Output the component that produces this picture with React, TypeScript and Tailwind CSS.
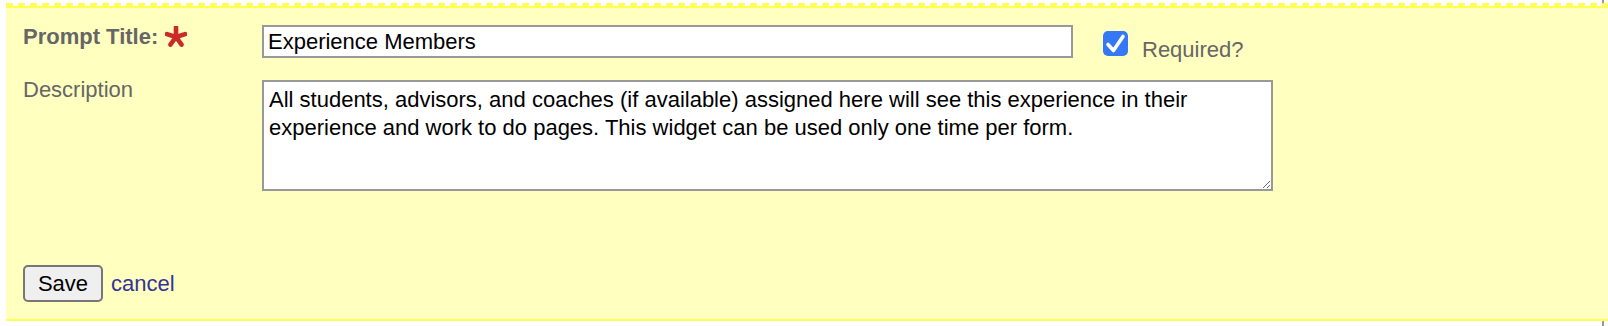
import React from 'react';

const RequiredStar = () => (
  <svg width="22" height="22" viewBox="-11 -11 22 22" className="ml-[7px] mt-[1px]">
    {[-90, -18, 54, 126, 198].map((a) => (
      <line
        key={a}
        x1="0"
        y1="0"
        x2={9.5 * Math.cos((a * Math.PI) / 180)}
        y2={9.5 * Math.sin((a * Math.PI) / 180)}
        stroke="#cc2929"
        strokeWidth="4.6"
        strokeLinecap="round"
      />
    ))}
  </svg>
);

const CheckedBox = () => (
  <span className="mt-[6px] ml-[30px] flex h-[25px] w-[25px] shrink-0 items-center justify-center rounded-[5px] bg-[#3478f6]">
    <svg width="25" height="25" viewBox="0 0 25 25">
      <path d="M5 13.5 L10.5 19.5 L20 5.5" fill="none" stroke="#fff" strokeWidth="3.6" strokeLinecap="round" strokeLinejoin="round" />
    </svg>
  </span>
);

export default function App() {
  return (
    <div className="h-[326px] w-[1604px] border-r-2 border-[#999] bg-white pt-[3px] font-['Liberation_Sans',Arial,sans-serif]">
      <div className="ml-[6px] w-[1602px] border-b-2 border-[#ffff55] bg-[#ffffc0]">
        <div className="h-[3px] bg-[repeating-linear-gradient(90deg,#ffff55_0_7px,#ffffff_7px_12px)]" />
        <div className="h-[2px] bg-[#ffff55]" />
        <div className="pl-[17px] pt-[17px] pb-[17px]">
          <div className="flex h-[33px] items-start">
            <div className="flex w-[239px] items-start text-[22px] leading-[24px] font-bold text-[#666]">
              Prompt Title:
              <RequiredStar />
            </div>
            <input
              type="text"
              defaultValue="Experience Members"
              className="h-[33px] w-[811px] border-2 border-[#999] bg-white px-[4px] text-[22px] text-black outline-none"
            />
            <CheckedBox />
            <span className="mt-[13px] ml-[14px] text-[22px] leading-[24px] text-[#666]">Required?</span>
          </div>

          <div className="mt-[22px] flex items-start">
            <div className="-mt-[2px] w-[239px] text-[22px] leading-[24px] text-[#666]">Description</div>
            <textarea
              defaultValue="All students, advisors, and coaches (if available) assigned here will see this experience in their experience and work to do pages. This widget can be used only one time per form."
              className="h-[111px] w-[1011px] border-2 border-[#999] bg-white px-[5px] pt-[4px] text-[22px] leading-[28px] text-black outline-none"
            />
          </div>

          <div className="mt-[74px] flex items-center">
            <button className="h-[37px] w-[80px] rounded-[5px] border-2 border-[#767676] bg-[#efefef] text-[22px] text-black">
              Save
            </button>
            <a href="#" className="ml-[8px] text-[22px] text-[#333399]">
              cancel
            </a>
          </div>
        </div>
      </div>
    </div>
  );
}
